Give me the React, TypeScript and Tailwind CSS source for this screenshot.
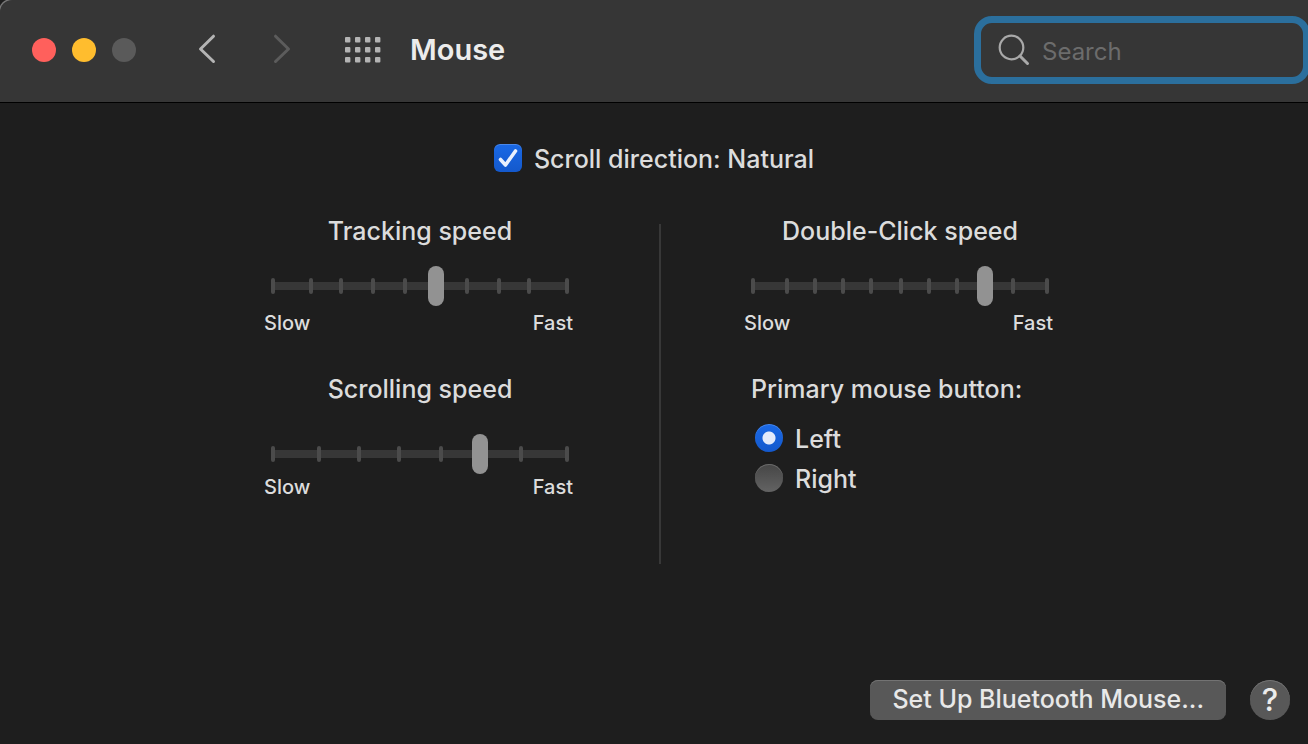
import { useState } from "react";

type SpeedSliderProps = {
  id: string;
  label: string;
  steps: number;
  initial: number;
  titleGap: string;
  labelGap: string;
};

const TRAVEL = 282;

function tickOffset(index: number, steps: number) {
  if (index === 0) return 0;
  if (index === steps) return 294;
  return Math.round((6 + (TRAVEL * index) / steps) / 2) * 2;
}

function SpeedSlider({ id, label, steps, initial, titleGap, labelGap }: SpeedSliderProps) {
  const [value, setValue] = useState(initial);
  return (
    <div className="flex w-[312px] flex-col">
      <label htmlFor={id} className="text-center leading-8">
        {label}
      </label>
      <div className={`relative mx-[7px] flex h-10 items-center ${titleGap}`}>
        <div className="h-2 w-full bg-[#373737]" />
        {Array.from({ length: steps + 1 }, (_, i) => (
          <span
            key={i}
            className="absolute top-3 h-4 w-1 rounded-full bg-[#4b4b4b]"
            style={{ left: tickOffset(i, steps) }}
          />
        ))}
        <input
          id={id}
          type="range"
          min={0}
          max={steps}
          value={value}
          onChange={(e) => setValue(Number(e.target.value))}
          className="absolute inset-0 m-0 h-10 w-full appearance-none bg-transparent outline-none [&::-webkit-slider-thumb]:h-10 [&::-webkit-slider-thumb]:w-4 [&::-webkit-slider-thumb]:appearance-none [&::-webkit-slider-thumb]:rounded-full [&::-webkit-slider-thumb]:bg-[#929292]"
        />
      </div>
      <div className={`flex justify-between pr-[3px] text-[20px] leading-6 ${labelGap}`}>
        <span>Slow</span>
        <span>Fast</span>
      </div>
    </div>
  );
}

function RadioOption({ label, checked, onSelect }: { label: string; checked: boolean; onSelect: () => void }) {
  return (
    <label className="flex items-start gap-3">
      <input
        type="radio"
        name="primary-button"
        checked={checked}
        onChange={onSelect}
        className="size-7 appearance-none rounded-full bg-linear-to-b from-[#464646] to-[#636363] shadow-[inset_0_1px_0_#6a6a6a] checked:bg-[radial-gradient(circle,#e3ebfb_6px,transparent_7px),linear-gradient(#1a69e6,#1459cc)] checked:shadow-[inset_0_1px_0_#4a88ea]"
      />
      <span className="leading-[30px]">{label}</span>
    </label>
  );
}

export default function App() {
  const [natural, setNatural] = useState(true);
  const [primary, setPrimary] = useState("Left");
  const [query, setQuery] = useState("");

  return (
    <div className="flex min-h-screen flex-col bg-[#1e1e1e] font-['Inter','Liberation_Sans',sans-serif] text-[25px] font-medium text-[#dcdcdc]">
      <header className="flex items-center overflow-hidden rounded-tl-[12px] border-b border-black bg-[#363636] pt-4 pb-[18px] pl-8 shadow-[-1px_-1px_0_#777777]">
        <div className="flex gap-4">
          <button aria-label="Close" className="size-6 rounded-full bg-[#ff605c]" />
          <button aria-label="Minimize" className="size-6 rounded-full bg-[#ffbd2e]" />
          <button aria-label="Zoom" className="size-6 rounded-full bg-[#5a5a5a]" />
        </div>
        <nav className="ml-[60px] flex items-center">
          <button aria-label="Back" className="text-[#b4b4b4]">
            <svg width="24" height="32" viewBox="0 0 24 32" fill="none" stroke="currentColor" strokeWidth="3" strokeLinecap="round" strokeLinejoin="round">
              <path d="M17.500 2.200 4.500 15 17.500 27.500" />
            </svg>
          </button>
          <button aria-label="Forward" className="ml-[50px] text-[#5c5c5c]">
            <svg width="24" height="32" viewBox="0 0 24 32" fill="none" stroke="currentColor" strokeWidth="3" strokeLinecap="round" strokeLinejoin="round">
              <path d="M5.500 2.200 18.500 15 5.500 27.500" />
            </svg>
          </button>
          <button aria-label="Show All" className="ml-[51px] text-[#b4b4b4]">
            <svg width="36" height="26" viewBox="0 0 36 26" fill="currentColor">
              {[0, 10, 20].map((y) =>
                [0, 10, 20, 30].map((x) => <rect key={`${x}-${y}`} x={x} y={y} width="5.400" height="5.400" rx="1" />),
              )}
            </svg>
          </button>
        </nav>
        <h1 className="ml-[29px] text-[29px] leading-9 font-semibold text-[#ececec]">Mouse</h1>
        <label className="-mr-[2px] ml-auto flex h-[68px] w-[336px] items-center gap-3 rounded-[18px] border-7 border-[#2b6f9d] pl-[17px]">
          <svg width="32" height="32" viewBox="0 0 32 32" fill="none" stroke="#a9a9a9" strokeLinecap="round" className="shrink-0" aria-hidden="true">
            <circle cx="13.500" cy="13.500" r="11.800" strokeWidth="2.200" />
            <path d="m22 22 7.500 7.500" strokeWidth="3" />
          </svg>
          <input
            type="text"
            aria-label="Search"
            placeholder="Search"
            value={query}
            onChange={(e) => setQuery(e.target.value)}
            className="min-w-0 flex-1 bg-transparent pt-1 text-[24px] leading-8 font-normal outline-none placeholder:text-[#6c6c6c]"
          />
        </label>
      </header>

      <main className="flex flex-1 flex-col items-center pt-10">
        <label className="flex items-start gap-3">
          <span className="grid pt-px">
            <input
              type="checkbox"
              checked={natural}
              onChange={(e) => setNatural(e.target.checked)}
              className="peer col-start-1 row-start-1 size-7 appearance-none rounded-[6px] bg-[#5a5a5a] checked:bg-linear-to-b checked:from-[#1a69e6] checked:to-[#1459cc] checked:shadow-[inset_0_1px_0_#4a88ea]"
            />
            <svg
              viewBox="0 0 28 28"
              fill="none"
              stroke="#eaf1fd"
              strokeWidth="3.600"
              strokeLinecap="round"
              strokeLinejoin="round"
              className="pointer-events-none invisible col-start-1 row-start-1 size-7 peer-checked:visible"
              aria-hidden="true"
            >
              <path d="M6.500 15.500 11.500 21 21.500 7" />
            </svg>
          </span>
          <span className="leading-8">Scroll direction: Natural</span>
        </label>

        <div className="mt-10 flex pl-3">
          <section className="flex flex-col">
            <SpeedSlider id="tracking" label="Tracking speed" steps={9} initial={5} titleGap="mt-[19px]" labelGap="mt-[5px]" />
            <div className="mt-[38px]">
              <SpeedSlider id="scrolling" label="Scrolling speed" steps={7} initial={5} titleGap="mt-[29px]" labelGap="mt-[1px]" />
            </div>
          </section>
          <div className="mx-[83px] mt-[9px] h-[340px] w-[2px] bg-[#383838]" />
          <section className="flex flex-col">
            <SpeedSlider id="double-click" label="Double-Click speed" steps={10} initial={8} titleGap="mt-[19px]" labelGap="mt-[5px]" />
            <fieldset className="mt-[38px] pl-[7px]">
              <legend className="leading-8">Primary mouse button:</legend>
              <div className="mt-[19px] flex flex-col items-start gap-[10px] pl-1">
                {["Left", "Right"].map((side) => (
                  <RadioOption key={side} label={side} checked={primary === side} onSelect={() => setPrimary(side)} />
                ))}
              </div>
            </fieldset>
          </section>
        </div>
      </main>

      <footer className="flex items-center justify-end gap-6 pr-[18px] pb-6">
        <button className="h-10 rounded-[8px] bg-[#585858] px-[22px] pb-0.5 leading-8 text-[#e8e8e8] shadow-[inset_0_1px_0_#737373]">
          Set Up Bluetooth Mouse...
        </button>
        <button aria-label="Help" className="size-10 rounded-full bg-[#585858] text-[31px] leading-10 text-[#ececec] shadow-[inset_0_1px_0_#737373]">
          ?
        </button>
      </footer>
    </div>
  );
}
